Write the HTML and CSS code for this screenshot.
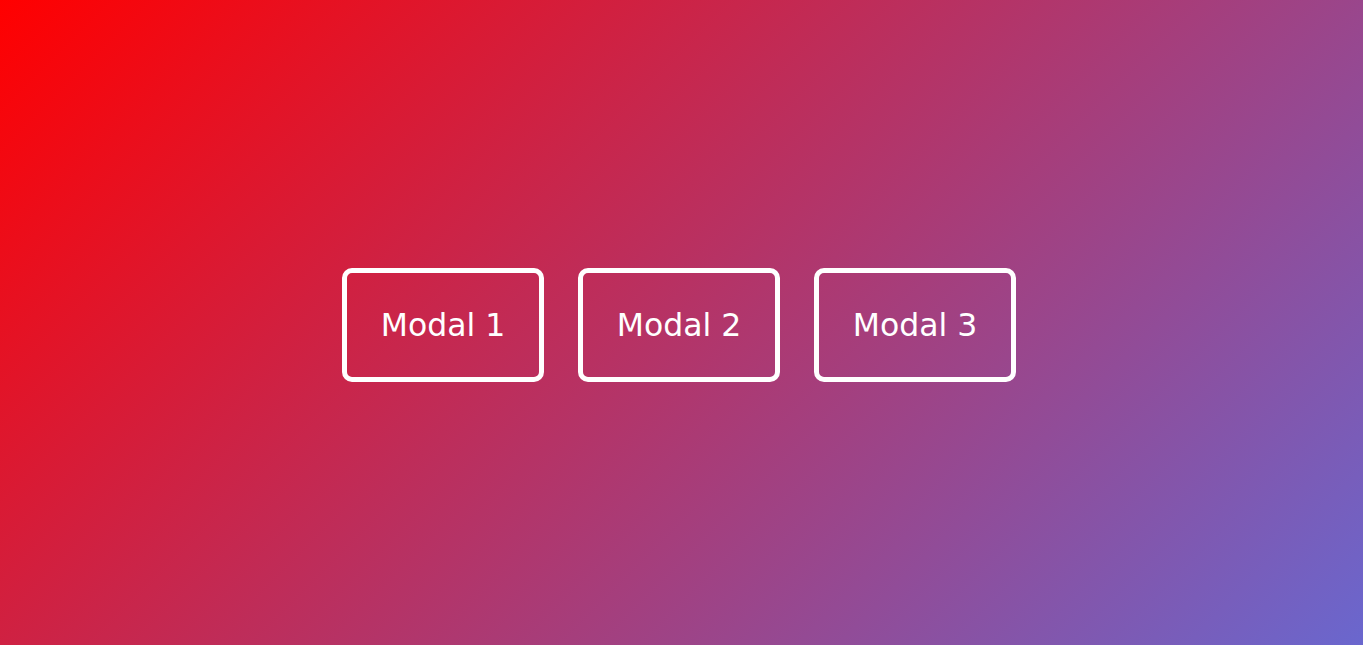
FILE: index.html
```html
<!DOCTYPE html>
<html>
<head>
<meta charset="utf-8">
<link rel="stylesheet" href="styles.css">
</head>
<body>
<main class="stage">
  <div class="buttons">
    <button class="modal-btn">Modal 1</button>
    <button class="modal-btn">Modal 2</button>
    <button class="modal-btn">Modal 3</button>
  </div>
</main>
</body>
</html>
```

FILE: styles.css
```css
html, body {
  margin: 0;
  height: 100%;
}
body {
  background: linear-gradient(135deg, #ff0000 0%, #6a67ce 100%);
  font-family: "DejaVu Sans", Verdana, sans-serif;
}
.stage {
  height: 100%;
  display: flex;
  align-items: center;
  justify-content: center;
}
.buttons {
  display: flex;
  gap: 34px;
  margin-top: 4px;
  margin-left: -5px;
}
.modal-btn {
  box-sizing: border-box;
  background: transparent;
  border: 5px solid #fff;
  border-radius: 10px;
  color: #fff;
  font-family: "DejaVu Sans", Verdana, sans-serif;
  font-size: 31.5px;
  padding: 0;
  width: 202px;
  height: 114px;
  white-space: nowrap;
  cursor: pointer;
}
```
